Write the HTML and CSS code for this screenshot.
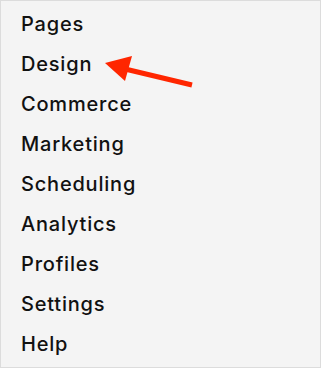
FILE: index.html
```html
<!DOCTYPE html>
<html>
<head>
<meta charset="utf-8">
<link rel="stylesheet" href="styles.css">
</head>
<body>
<nav class="menu">
  <ul class="list">
    <li class="item">Pages</li>
    <li class="item item-design">Design
      <svg class="arrow" width="100" height="40" viewBox="0 0 100 40">
        <polygon points="4,13 31,6 24,31" fill="#ff2600"/>
        <line x1="24" y1="19" x2="91" y2="35" stroke="#ff2600" stroke-width="5"/>
      </svg>
    </li>
    <li class="item">Commerce</li>
    <li class="item">Marketing</li>
    <li class="item">Scheduling</li>
    <li class="item">Analytics</li>
    <li class="item">Profiles</li>
    <li class="item">Settings</li>
    <li class="item">Help</li>
  </ul>
</nav>
</body>
</html>
```
FILE: styles.css
```css
html, body {
  margin: 0;
  padding: 0;
}
body {
  width: 321px;
  height: 368px;
  box-sizing: border-box;
  border: 1px solid #dcdcdc;
  background: #f4f4f4;
  font-family: Inter, "Noto Sans", sans-serif;
  color: #111;
  overflow: hidden;
}
.list {
  list-style: none;
  margin: 0;
  padding: 3px 0 0 20px;
}
.item {
  height: 40px;
  line-height: 40px;
  font-size: 20px;
  font-weight: 500;
  letter-spacing: 0.8px;
  position: relative;
}
.arrow {
  position: absolute;
  left: 80px;
  top: 6px;
}
```
